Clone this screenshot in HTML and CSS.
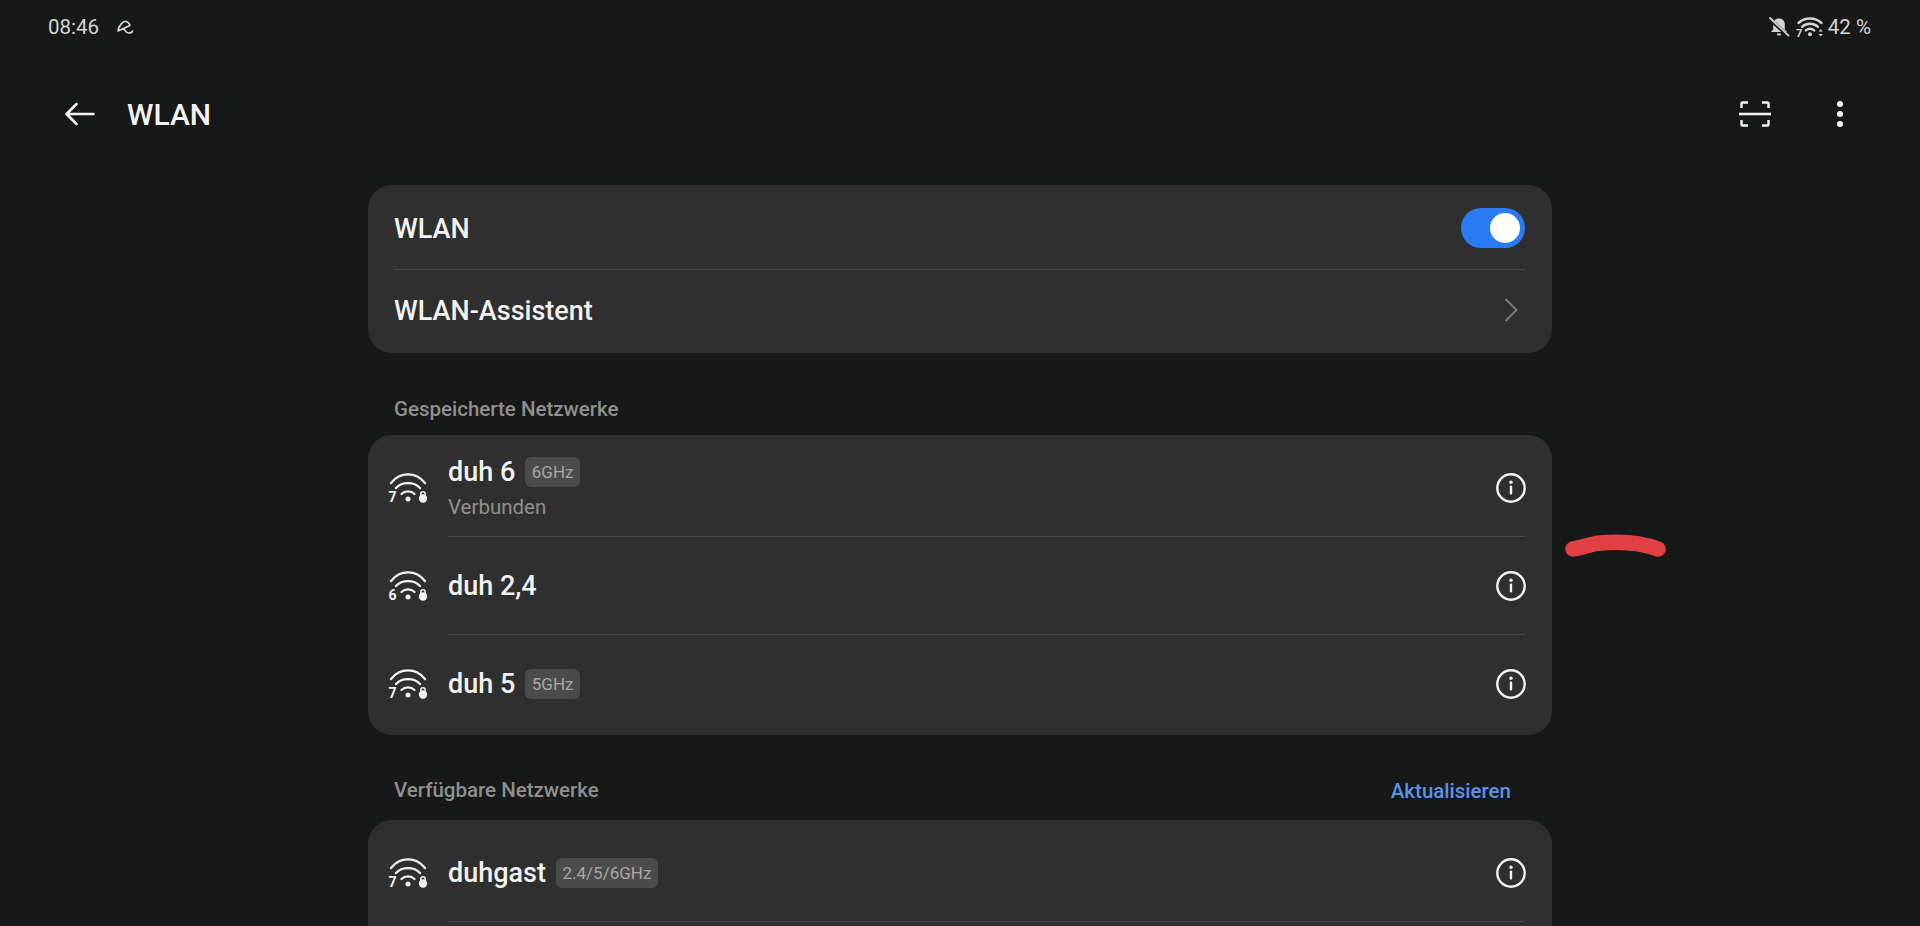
FILE: index.html
```html
<!DOCTYPE html>
<html lang="de">
<head>
  <meta charset="UTF-8">
  <meta name="viewport" content="width=device-width, initial-scale=1">
  <title>WLAN</title>
  <link rel="stylesheet" href="styles.css">
</head>
<body>
  <!-- shared icons -->
  <svg class="defs" width="0" height="0" aria-hidden="true">
    <symbol id="wifi" viewBox="0 0 42 36">
      <path d="M3 10C12 -1.500 28 -1.500 37 10" fill="none" stroke="currentColor" stroke-width="2.400" stroke-linecap="round"/>
      <path d="M8 15C14 8.500 26 8.500 32 15" fill="none" stroke="currentColor" stroke-width="2.400" stroke-linecap="round"/>
      <path d="M13.500 21C17 17.500 23 17.500 26.500 21" fill="none" stroke="currentColor" stroke-width="2.400" stroke-linecap="round"/>
      <circle cx="20" cy="26" r="2.500" fill="currentColor"/>
      <path d="M32.800 22.500v-1.600a2.200 2.200 0 0 1 4.400 0v1.600" fill="none" stroke="currentColor" stroke-width="1.500"/>
      <circle cx="35" cy="25.500" r="4.200" fill="currentColor"/>
    </symbol>
    <symbol id="info" viewBox="0 0 30 30">
      <circle cx="15" cy="15" r="13.700" fill="none" stroke="currentColor" stroke-width="2.400"/>
      <circle cx="15" cy="9.200" r="1.700" fill="currentColor"/>
      <rect x="13.800" y="12.600" width="2.400" height="9" rx="1" fill="currentColor"/>
    </symbol>
  </svg>

  <div class="status">
    <div class="status-left">
      <span>08:46</span>
      <svg class="status-app" viewBox="0 0 17 15" width="17" height="15">
        <path d="M1 11C2 5 6 1 9 1.500C11 2 12.500 3.500 13 5.500L1 11M7 8.500C8 11 10 13 12 13C13.500 13 15 12.500 15.500 11" fill="none" stroke="currentColor" stroke-width="1.700" stroke-linecap="round" stroke-linejoin="round"/>
      </svg>
    </div>
    <div class="status-right">
      <svg class="status-bell" viewBox="0 0 22 20" width="22" height="20">
        <path d="M11 1.600c-3.600 0-5.800 2.600-5.800 6v4.600L3 15h16l-2.200-2.800V7.600c0-3.400-2.200-6-5.800-6z" fill="currentColor"/>
        <path d="M8.800 16.400a2.200 2.200 0 0 0 4.400 0z" fill="currentColor"/>
        <path d="M1.600 1.600L20 19" stroke="#171818" stroke-width="3.600"/>
        <path d="M2 1L20.600 18.600" stroke="currentColor" stroke-width="1.800" stroke-linecap="round"/>
      </svg>
      <svg class="status-wifi" viewBox="0 0 28 26" width="28" height="26">
        <path d="M2.500 7C9 1 19 1 25.500 7M6 10.800c4.600-4 11.400-4 16 0M9.800 14.400c2.600-2 5.800-2 8.400 0" fill="none" stroke="currentColor" stroke-width="2.400" stroke-linecap="round"/>
        <circle cx="14" cy="18.200" r="2" fill="currentColor"/>
        <path d="M22.500 15.600l2.200-2.400 2.200 2.400zM22.500 18l2.200 2.400L26.900 18z" fill="currentColor"/>
        <text x="0" y="21" class="wifi-gen wifi-gen--small">7</text>
      </svg>
      <span>42 %</span>
    </div>
  </div>

  <header class="toolbar">
    <div class="toolbar-left">
      <svg viewBox="0 0 30 24" width="30" height="24">
        <path d="M28.500 12H2M11.500 2L1.500 12l10 10" fill="none" stroke="currentColor" stroke-width="2.600" stroke-linecap="round" stroke-linejoin="round"/>
      </svg>
      <h1>WLAN</h1>
    </div>
    <div class="toolbar-right">
      <svg viewBox="0 0 32 28" width="32" height="28">
        <path d="M2.500 8V3.500A1 1 0 0 1 3.500 2.500H9M23 2.500h5.500A1 1 0 0 1 29.500 3.500V8M2.500 20v4.500A1 1 0 0 0 3.500 25.500H9M23 25.500h5.500a1 1 0 0 0 1-1V20" fill="none" stroke="currentColor" stroke-width="2.400"/>
        <path d="M0 14h32" stroke="currentColor" stroke-width="2.600"/>
      </svg>
      <svg viewBox="0 0 6 26" width="6" height="26">
        <circle cx="3" cy="3" r="3" fill="currentColor"/>
        <circle cx="3" cy="13" r="3" fill="currentColor"/>
        <circle cx="3" cy="23" r="3" fill="currentColor"/>
      </svg>
    </div>
  </header>

  <main class="content">
    <section class="card">
      <div class="row">
        <span class="row-title">WLAN</span>
        <span class="switch"><span class="switch-knob"></span></span>
      </div>
      <div class="row">
        <span class="row-title">WLAN-Assistent</span>
        <svg class="chevron" viewBox="0 0 14 24" width="14" height="24">
          <path d="M1.500 1l11 11-11 11" fill="none" stroke="currentColor" stroke-width="2"/>
        </svg>
      </div>
    </section>

    <div class="section-head">
      <span>Gespeicherte Netzwerke</span>
    </div>
    <section class="card">
      <div class="net">
        <svg class="net-icon" viewBox="0 0 42 36"><use href="#wifi"/><text x="0.500" y="29" class="wifi-gen">7</text></svg>
        <div class="net-main">
          <div>
            <div class="net-line">
              <span class="net-name">duh 6</span>
              <span class="badge">6GHz</span>
            </div>
            <div class="net-state">Verbunden</div>
          </div>
          <svg class="info" viewBox="0 0 30 30"><use href="#info"/></svg>
        </div>
      </div>
      <div class="net">
        <svg class="net-icon" viewBox="0 0 42 36"><use href="#wifi"/><text x="0.500" y="29" class="wifi-gen">6</text></svg>
        <div class="net-main">
          <div class="net-line">
            <span class="net-name">duh 2,4</span>
          </div>
          <svg class="info" viewBox="0 0 30 30"><use href="#info"/></svg>
        </div>
      </div>
      <div class="net net--last">
        <svg class="net-icon" viewBox="0 0 42 36"><use href="#wifi"/><text x="0.500" y="29" class="wifi-gen">7</text></svg>
        <div class="net-main">
          <div class="net-line">
            <span class="net-name">duh 5</span>
            <span class="badge">5GHz</span>
          </div>
          <svg class="info" viewBox="0 0 30 30"><use href="#info"/></svg>
        </div>
      </div>
    </section>

    <div class="section-head section-head--tall">
      <span>Verfügbare Netzwerke</span>
      <a class="refresh">Aktualisieren</a>
    </div>
    <section class="card card--open">
      <div class="net">
        <svg class="net-icon" viewBox="0 0 42 36"><use href="#wifi"/><text x="0.500" y="29" class="wifi-gen">7</text></svg>
        <div class="net-main">
          <div class="net-line">
            <span class="net-name">duhgast</span>
            <span class="badge">2.4/5/6GHz</span>
          </div>
          <svg class="info" viewBox="0 0 30 30"><use href="#info"/></svg>
        </div>
      </div>
    </section>
  </main>

  <!-- red pen mark on top of the screenshot -->
  <svg class="scribble" viewBox="0 0 120 40" width="120" height="40">
    <path d="M12 24C20 23 27 20 35 18.500C55 16 78 17 97 24" fill="none" stroke="#e04044" stroke-width="15.500" stroke-linecap="round"/>
  </svg>
</body>
</html>
```

FILE: styles.css
```css
* {
  box-sizing: border-box;
  margin: 0;
  padding: 0;
}

body {
  font-family: 'Roboto', sans-serif;
  background: #171818;
  color: #f2f2f2;
  height: 926px;
  overflow: hidden;
  position: relative;
}

.defs {
  position: absolute;
}

/* Status bar */
.status {
  height: 54px;
  padding: 0 49px 0 48px;
  display: flex;
  align-items: center;
  justify-content: space-between;
  font-size: 20.5px;
  color: #d4d4d4;
}

.status-left {
  display: flex;
  align-items: center;
  gap: 18px;
}

.status-right {
  display: flex;
  align-items: center;
  gap: 8px;
}

.status-bell {
  margin-right: -2px;
}

.status-wifi {
  margin: 4px -4px 0 0;
}

/* Toolbar */
.toolbar {
  height: 120px;
  margin-bottom: 11px;
  padding: 0 77px 0 65px;
  display: flex;
  align-items: center;
  justify-content: space-between;
}

.toolbar-left {
  display: flex;
  align-items: center;
  gap: 32px;
}

.toolbar-left h1 {
  font-size: 30px;
  font-weight: 500;
}

.toolbar-right {
  display: flex;
  align-items: center;
  gap: 66px;
}

/* Cards */
.content {
  width: 1184px;
  margin: 0 auto;
}

.card {
  background: #2f2f2f;
  border-radius: 24px;
  padding: 4px 0 2px;
}

.card--open {
  min-height: 300px;
}

.row {
  height: 81px;
  margin: 0 27px 0 26px;
  display: flex;
  align-items: center;
  justify-content: space-between;
  border-bottom: 1px solid #484848;
}

.row:last-child {
  border-bottom: none;
}

.row-title {
  font-size: 27px;
  font-weight: 500;
}

.switch {
  width: 64px;
  height: 40px;
  margin-top: -2px;
  border-radius: 20px;
  background: #2a7bf6;
  display: flex;
  align-items: center;
  justify-content: flex-end;
  padding-right: 5px;
}

.switch-knob {
  width: 30px;
  height: 30px;
  border-radius: 50%;
  background: #fff;
}

.chevron {
  color: #7a7a7a;
  margin: -2px 7px 0 0;
}

/* Section headings */
.section-head {
  height: 82px;
  padding: 0 41px 14px 26px;
  display: flex;
  align-items: flex-end;
  justify-content: space-between;
  font-size: 20.5px;
  font-weight: 500;
  color: #8f8f8f;
}

.section-head--tall {
  height: 85px;
  padding-bottom: 18px;
}

.refresh {
  color: #5b93ea;
  margin-bottom: -1px;
}

/* Network rows */
.net {
  height: 98px;
  padding-left: 20px;
  display: flex;
  align-items: center;
}

.net-icon {
  width: 42px;
  height: 36px;
  margin: 5px 18px 0 0;
  flex-shrink: 0;
}

.net-main {
  flex: 1;
  height: 100%;
  margin-right: 27px;
  display: flex;
  align-items: center;
  justify-content: space-between;
  border-bottom: 1px solid #484848;
}

.net--last .net-main {
  border-bottom: none;
}

.net-line {
  display: flex;
  align-items: center;
  gap: 10px;
}

.net-name {
  font-size: 27px;
  font-weight: 500;
}

.badge {
  height: 30px;
  padding: 0 6.500px;
  border-radius: 6px;
  background: #4b4b4b;
  color: #a6a6a6;
  font-size: 17px;
  line-height: 30px;
}

.net-state {
  margin-top: 7px;
  font-size: 20.5px;
  color: #8f8f8f;
}

.info {
  width: 30px;
  height: 30px;
  margin-right: -1px;
  flex-shrink: 0;
}

.wifi-gen {
  font-family: 'Roboto', sans-serif;
  font-size: 14px;
  font-weight: 700;
  fill: currentColor;
}

.wifi-gen--small {
  font-size: 11px;
}

.scribble {
  position: absolute;
  left: 1561px;
  top: 525px;
}
```
